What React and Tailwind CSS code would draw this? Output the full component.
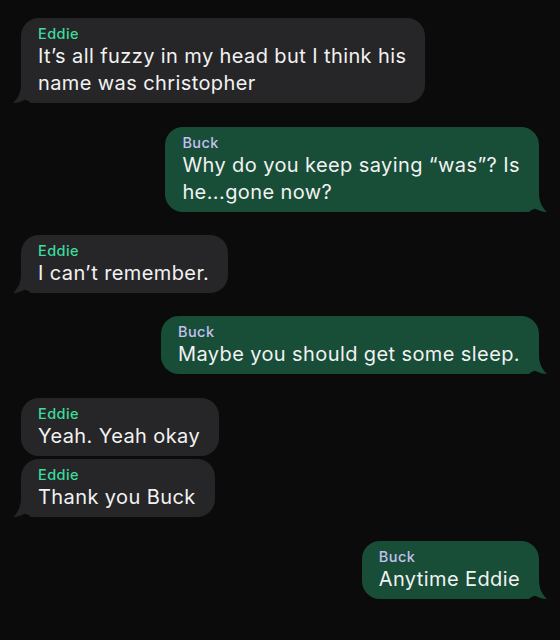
import React from "react";

const messages = [
  { from: "Eddie", text: ["It’s all fuzzy in my head but I think his", "name was christopher"], gap: "mt-[18px]", tail: true },
  { from: "Buck", text: ["Why do you keep saying “was”? Is", "he...gone now?"], gap: "mt-[24px]", tail: true },
  { from: "Eddie", text: ["I can’t remember."], gap: "mt-[23px]", tail: true },
  { from: "Buck", text: ["Maybe you should get some sleep."], gap: "mt-[23px]", tail: true },
  { from: "Eddie", text: ["Yeah. Yeah okay"], gap: "mt-[24px]", tail: false },
  { from: "Eddie", text: ["Thank you Buck"], gap: "mt-[3px]", tail: true },
  { from: "Buck", text: ["Anytime Eddie"], gap: "mt-[24px]", tail: true },
];

function Tail({ mine }) {
  // little iMessage-style tail at the bottom corner
  return (
    <svg
      width="24"
      height="22"
      viewBox="0 0 24 22"
      className={
        mine
          ? "absolute right-[-9px] bottom-0 -scale-x-100 fill-[#184d38]"
          : "absolute left-[-9px] bottom-0 fill-[#262628]"
      }
    >
      <path d="M9 0 L24 0 L24 22 L19 22 C17 20.5 15 19 13 18.8 C10 20.2 5.5 22 1 22 C5.5 18 9 12 9 3 Z" />
    </svg>
  );
}

function Bubble({ msg }) {
  const mine = msg.from === "Buck";
  return (
    <div className={`flex ${mine ? "justify-end pr-[21px]" : "justify-start pl-[21px]"} ${msg.gap}`}>
      <div
        className={`relative rounded-[18px] pl-[17px] pr-[19px] pt-[6px] pb-[6px] ${
          mine ? "bg-[#184d38]" : "bg-[#262628]"
        }`}
      >
        {msg.tail && <Tail mine={mine} />}
        <div
          className={`relative text-[14.5px] leading-[19px] font-medium tracking-[0.45px] ${
            mine ? "text-[#c4c0f0]" : "text-[#3ddc9c]"
          }`}
        >
          {msg.from}
        </div>
        <div className="relative text-[20px] leading-[27px] tracking-[0.4px] text-[#f2f2f2] whitespace-nowrap">
          {msg.text.map((line, i) => (
            <div key={i}>{line}</div>
          ))}
        </div>
      </div>
    </div>
  );
}

export default function App() {
  return (
    <div
      className="w-[560px] h-[640px] overflow-hidden bg-[#0b0b0b] flex flex-col"
      style={{ fontFamily: "Inter, 'Noto Sans', sans-serif" }}
    >
      {messages.map((m, i) => (
        <Bubble key={i} msg={m} />
      ))}
    </div>
  );
}
